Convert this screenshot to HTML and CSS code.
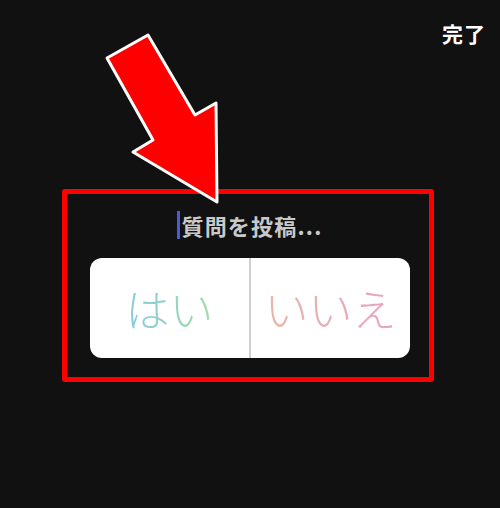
FILE: index.html
```html
<!DOCTYPE html>
<html lang="ja">
<head>
<meta charset="utf-8">
<link rel="stylesheet" href="styles.css">
</head>
<body>
<div class="screen">
  <header class="topbar"><span class="done">完了</span></header>
  <section class="frame">
    <div class="prompt"><span class="cursor"></span><span class="prompt-text">質問を投稿...</span></div>
    <div class="card">
      <div class="option"><span class="yes">はい</span></div>
      <div class="divider"></div>
      <div class="option"><span class="no">いいえ</span></div>
    </div>
  </section>
  <svg class="arrow" width="500" height="508" viewBox="0 0 500 508">
    <polygon points="107,58 148,35 195,115 216,103 217,202 133,152 153,140" fill="#ff0000" stroke="#ffffff" stroke-width="3" stroke-linejoin="round"/>
  </svg>
</div>
</body>
</html>
```
FILE: styles.css
```css
html, body {
  margin: 0;
  padding: 0;
  background: #111111;
}
.screen {
  position: relative;
  width: 500px;
  height: 508px;
  overflow: hidden;
  font-family: "Noto Sans CJK JP", "Noto Sans", sans-serif;
}
.topbar {
  height: 64px;
  box-sizing: border-box;
  display: flex;
  justify-content: flex-end;
  align-items: flex-start;
  padding: 20px 14px 0 0;
}
.done {
  color: #ffffff;
  font-size: 21px;
  font-weight: 700;
  line-height: 26px;
  letter-spacing: 1px;
}
.frame {
  margin: 125px 0 0 62px;
  width: 372px;
  height: 193px;
  box-sizing: border-box;
  border: 5px solid #ff0000;
  border-radius: 3px;
  display: flex;
  flex-direction: column;
}
.prompt {
  display: flex;
  align-items: center;
  justify-content: center;
  height: 30px;
  margin-top: 16px;
  padding-left: 4px;
}
.cursor {
  width: 3px;
  height: 28px;
  background: #4a5ad8;
  margin-right: 1px;
}
.prompt-text {
  color: #c9c9c9;
  font-size: 22px;
  font-weight: 700;
  line-height: 26px;
  letter-spacing: 1.2px;
}
.card {
  margin: 18px 0 0 23px;
  width: 320px;
  height: 100px;
  background: #ffffff;
  border-radius: 12px;
  display: flex;
}
.option {
  flex: 1;
  display: flex;
  align-items: center;
  justify-content: center;
}
.divider {
  width: 2px;
  background: #d0d0d0;
}
.yes, .no {
  font-size: 44px;
  font-weight: 300;
  line-height: 1;
  -webkit-background-clip: text;
  background-clip: text;
  color: transparent;
}
.yes {
  background-image: linear-gradient(90deg, #86cbe2, #a6dca6);
}
.no {
  background-image: linear-gradient(90deg, #e9b6a2, #e6a4c4);
}
.arrow {
  position: absolute;
  left: 0;
  top: 0;
  pointer-events: none;
}
```
